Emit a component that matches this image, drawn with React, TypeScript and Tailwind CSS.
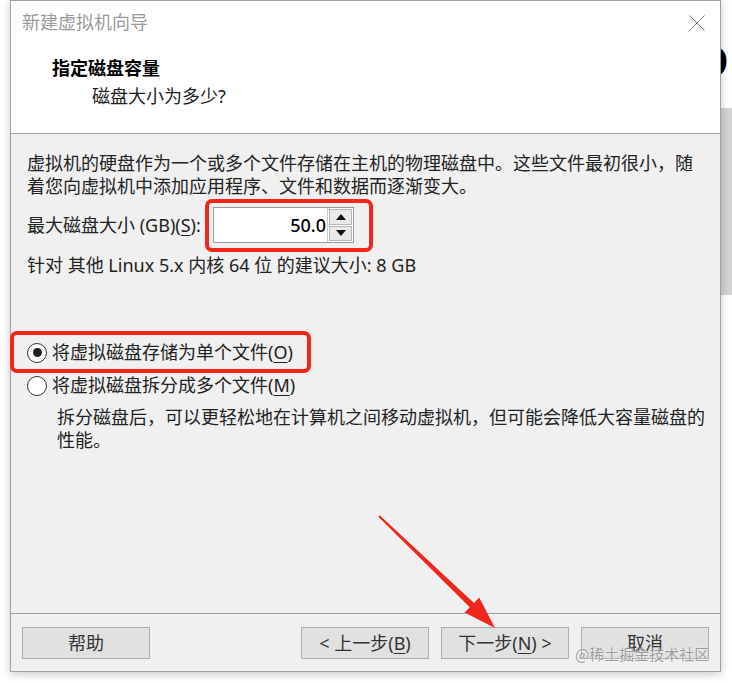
import React from "react";

function U({ children }: { children: React.ReactNode }) {
  return <span className="underline underline-offset-[3px]">{children}</span>;
}

function Btn({ children, className = "" }: { children: React.ReactNode; className?: string }) {
  return (
    <div
      className={
        "w-[128px] h-[32px] shrink-0 flex items-center justify-center bg-[#e1e1e1] border border-[#adadad] text-[#333]" +
        " " +
        className
      }
    >
      {children}
    </div>
  );
}

export default function App() {
  return (
    <div className="relative w-[732px] h-[683px] overflow-hidden bg-white flex font-['Noto_Sans','Noto_Sans_CJK_SC',sans-serif] text-[18px] leading-[23px] text-[#1e1e1e]">
      <div className="w-[10px] shrink-0" />

      {/* dialog */}
      <div className="w-[711px] h-[672px] shrink-0 border border-[#a0a0a0] bg-[#f0f0f0] flex flex-col shadow-[0_2px_9px_rgba(0,0,0,0.22)] relative z-10">
        {/* header */}
        <div className="h-[133px] shrink-0 bg-white border-b border-[#a0a0a0] flex flex-col pt-[10px] pl-[11px]">
          <div className="flex items-start justify-between pr-[15px]">
            <div className="text-[#9a9a9a]">新建虚拟机向导</div>
            <svg width="16" height="16" viewBox="0 0 16 16" className="mt-[4px]">
              <path d="M0.5 0.5 L15.5 15.5 M15.5 0.5 L0.5 15.5" stroke="#777" strokeWidth="1" fill="none" />
            </svg>
          </div>
          <div className="mt-[23px] pl-[30px] font-bold text-black">指定磁盘容量</div>
          <div className="mt-[5px] pl-[70px] text-[#222]">磁盘大小为多少?</div>
        </div>

        {/* body */}
        <div className="flex-1 flex flex-col pt-[18px] pl-[16px] pr-[8px] text-[#222]">
          <div className="w-[670px]">
            虚拟机的硬盘作为一个或多个文件存储在主机的物理磁盘中。这些文件最初很小，随着您向虚拟机中添加应用程序、文件和数据而逐渐变大。
          </div>

          <div className="mt-[9px] h-[36px] flex items-center">
            <div className="w-[186px] shrink-0 whitespace-nowrap">
              最大磁盘大小 (GB)(<U>S</U>):
            </div>
            <div className="h-[36px] flex border border-[#9a9a9a] bg-white">
              <div className="w-[113px] flex items-center justify-end pr-[1px] text-black font-medium">50.0</div>
              <div className="w-[26px] flex flex-col border-l border-[#c8c8c8] p-[1px] gap-[1px]">
                <div className="flex-1 flex items-center justify-center bg-[#e9e9e9] border border-[#b5b5b5]">
                  <svg width="10" height="6" viewBox="0 0 10 6">
                    <path d="M0 6 L5 0 L10 6 Z" fill="#111" />
                  </svg>
                </div>
                <div className="flex-1 flex items-center justify-center bg-[#e9e9e9] border border-[#b5b5b5]">
                  <svg width="10" height="6" viewBox="0 0 10 6">
                    <path d="M0 0 L10 0 L5 6 Z" fill="#111" />
                  </svg>
                </div>
              </div>
            </div>
          </div>

          <div className="mt-[11px] whitespace-nowrap">针对 其他 Linux 5.x 内核 64 位 的建议大小: 8 GB</div>

          <div className="mt-[64px] h-[23px] flex items-center gap-[5px]">
            <div className="w-[20px] h-[20px] rounded-full border border-[#333] bg-white flex items-center justify-center">
              <div className="w-[9px] h-[9px] rounded-full bg-[#222]" />
            </div>
            <div className="whitespace-nowrap">
              将虚拟磁盘存储为单个文件(<U>O</U>)
            </div>
          </div>

          <div className="mt-[10px] h-[23px] flex items-center gap-[5px]">
            <div className="w-[20px] h-[20px] rounded-full border border-[#333] bg-white" />
            <div className="whitespace-nowrap">
              将虚拟磁盘拆分成多个文件(<U>M</U>)
            </div>
          </div>

          <div className="mt-[9px] pl-[30px]">
            拆分磁盘后，可以更轻松地在计算机之间移动虚拟机，但可能会降低大容量磁盘的性能。
          </div>
        </div>

        {/* footer */}
        <div className="h-[58px] shrink-0 border-t border-[#a0a0a0] flex items-start pt-[13px] px-[11px]">
          <Btn>帮助</Btn>
          <div className="flex-1" />
          <div className="flex gap-[12px]">
            <Btn>
              &lt; 上一步(<U>B</U>)
            </Btn>
            <Btn>
              下一步(<U>N</U>) &gt;
            </Btn>
            <Btn>取消</Btn>
          </div>
        </div>
      </div>

      {/* background strip on the right */}
      <div className="w-[11px] shrink-0 flex flex-col">
        <div className="h-[44px]" />
        <div className="h-[36px] overflow-hidden">
          <div className="-ml-[27px] text-[44px] leading-[36px] font-bold text-black font-['Liberation_Sans',sans-serif]">O</div>
        </div>
        <div className="h-[28px]" />
        <div className="h-[187px] bg-[#d4d4d4]" />
      </div>

      {/* annotations */}
      <div className="absolute left-[205px] top-[199px] w-[168px] h-[53px] border-[4px] border-[#f3261b] rounded-[7px] z-20" />
      <div className="absolute left-[10px] top-[331px] w-[301px] h-[42px] border-[4px] border-[#f3261b] rounded-[7px] z-20" />
      <svg className="absolute left-0 top-0 z-20" width="732" height="683" viewBox="0 0 732 683">
        <polygon
          points="378.3,516.7 469.8,607.3 464.6,612.6 495,628 479.2,597.4 474.0,602.9 379.7,515.3"
          fill="#f3261b"
        />
      </svg>
      <div className="absolute left-[575px] top-[644px] z-20 text-[15px] leading-[20px] text-[rgba(140,140,140,0.85)] [text-shadow:0_0_2px_#fff] whitespace-nowrap font-['Noto_Sans_CJK_SC',sans-serif]">
        @稀土掘金技术社区
      </div>
    </div>
  );
}
